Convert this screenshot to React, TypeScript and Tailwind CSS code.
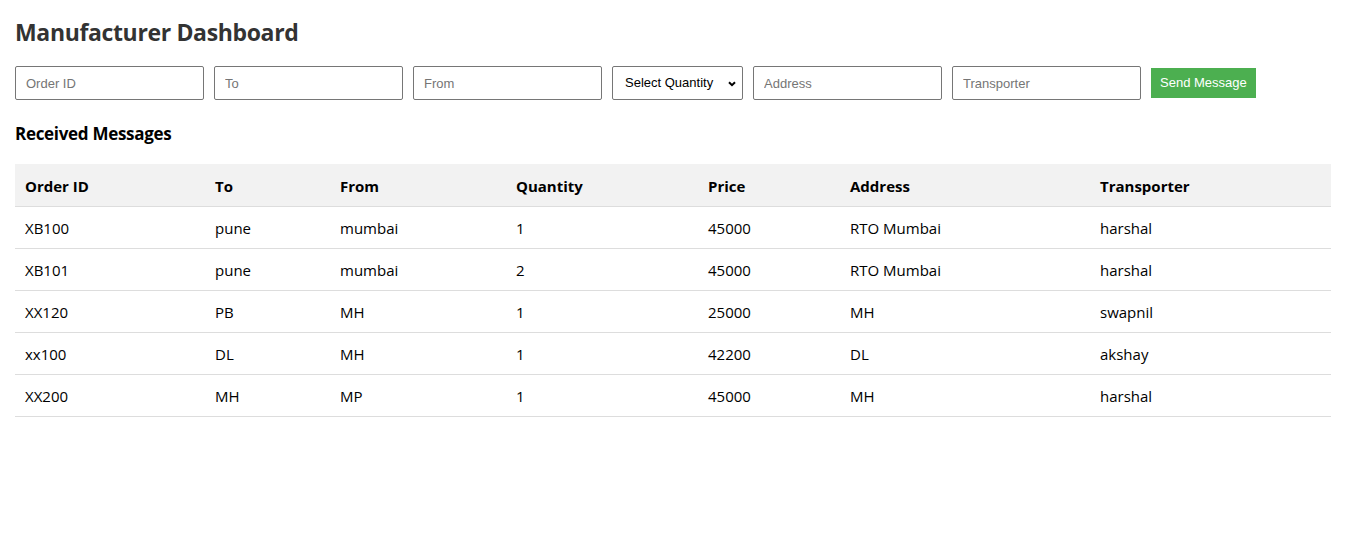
import React from 'react';

interface Message {
  orderId: string;
  to: string;
  from: string;
  quantity: number;
  price: number;
  address: string;
  transporter: string;
}

const messages: Message[] = [
  { orderId: 'XB100', to: 'pune', from: 'mumbai', quantity: 1, price: 45000, address: 'RTO Mumbai', transporter: 'harshal' },
  { orderId: 'XB101', to: 'pune', from: 'mumbai', quantity: 2, price: 45000, address: 'RTO Mumbai', transporter: 'harshal' },
  { orderId: 'XX120', to: 'PB', from: 'MH', quantity: 1, price: 25000, address: 'MH', transporter: 'swapnil' },
  { orderId: 'xx100', to: 'DL', from: 'MH', quantity: 1, price: 42200, address: 'DL', transporter: 'akshay' },
  { orderId: 'XX200', to: 'MH', from: 'MP', quantity: 1, price: 45000, address: 'MH', transporter: 'harshal' },
];

const inputClass =
  "w-[189px] h-[34px] border border-[#767676] rounded-[2px] px-[10px] text-[13px] text-black placeholder:text-[#757575] outline-none font-['Liberation_Sans',Arial,sans-serif] bg-white";

export default function App() {
  return (
    <main className="min-h-screen bg-white px-[15px] pt-[17px] font-['Open_Sans','Noto_Sans',sans-serif]">
      <h1 className="text-[23px] font-bold text-[#333] leading-[30px] tracking-[-0.35px]">Manufacturer Dashboard</h1>

      {/* Send form */}
      <div className="mt-[19px] flex items-center gap-[10px]">
        <input type="text" placeholder="Order ID" className={inputClass} />
        <input type="text" placeholder="To" className={inputClass} />
        <input type="text" placeholder="From" className={inputClass} />
        <div className="relative">
          <select
            defaultValue=""
            className="w-[131px] h-[34px] border border-[#767676] rounded-[2px] pl-[12px] pr-[4px] text-[13px] text-black bg-white font-['Liberation_Sans',Arial,sans-serif] appearance-none outline-none"
          >
            <option value="" disabled>Select Quantity</option>
            <option value="1">1</option>
            <option value="2">2</option>
            <option value="3">3</option>
          </select>
          {/* dropdown chevron */}
          <svg
            className="pointer-events-none absolute right-[7px] top-[15px]"
            width="8"
            height="6"
            viewBox="0 0 8 6"
          >
            <path d="M1 1.2l3 3 3-3" fill="none" stroke="black" strokeWidth="2" />
          </svg>
        </div>
        <input type="text" placeholder="Address" className={inputClass} />
        <input type="text" placeholder="Transporter" className={inputClass} />
        <button
          type="button"
          className="h-[30px] px-[9px] bg-[#4caf50] text-white text-[13px] font-['Liberation_Sans',Arial,sans-serif]"
        >
          Send Message
        </button>
      </div>

      <h2 className="mt-[22px] text-[17px] font-bold text-black leading-[24px] tracking-[-0.3px]">Received Messages</h2>

      {/* Messages table */}
      <table className="mt-[18px] w-[1316px] border-collapse text-left text-[15px] text-black">
        <thead>
          <tr className="bg-[#f2f2f2] border-b border-[#ddd]">
            <th className="w-[190px] h-[42px] px-[10px] pt-[2px] font-bold">Order ID</th>
            <th className="w-[125px] px-[10px] pt-[2px] font-bold">To</th>
            <th className="w-[176px] px-[10px] pt-[2px] font-bold">From</th>
            <th className="w-[192px] px-[10px] pt-[2px] font-bold">Quantity</th>
            <th className="w-[142px] px-[10px] pt-[2px] font-bold">Price</th>
            <th className="w-[250px] px-[10px] pt-[2px] font-bold">Address</th>
            <th className="px-[10px] pt-[2px] font-bold">Transporter</th>
          </tr>
        </thead>
        <tbody>
          {messages.map((m) => (
            <tr key={m.orderId} className="border-b border-[#ddd]">
              <td className="h-[42px] px-[10px] pt-[2px]">{m.orderId}</td>
              <td className="px-[10px] pt-[2px]">{m.to}</td>
              <td className="px-[10px] pt-[2px]">{m.from}</td>
              <td className="px-[10px] pt-[2px]">{m.quantity}</td>
              <td className="px-[10px] pt-[2px]">{m.price}</td>
              <td className="px-[10px] pt-[2px]">{m.address}</td>
              <td className="px-[10px] pt-[2px]">{m.transporter}</td>
            </tr>
          ))}
        </tbody>
      </table>
    </main>
  );
}
